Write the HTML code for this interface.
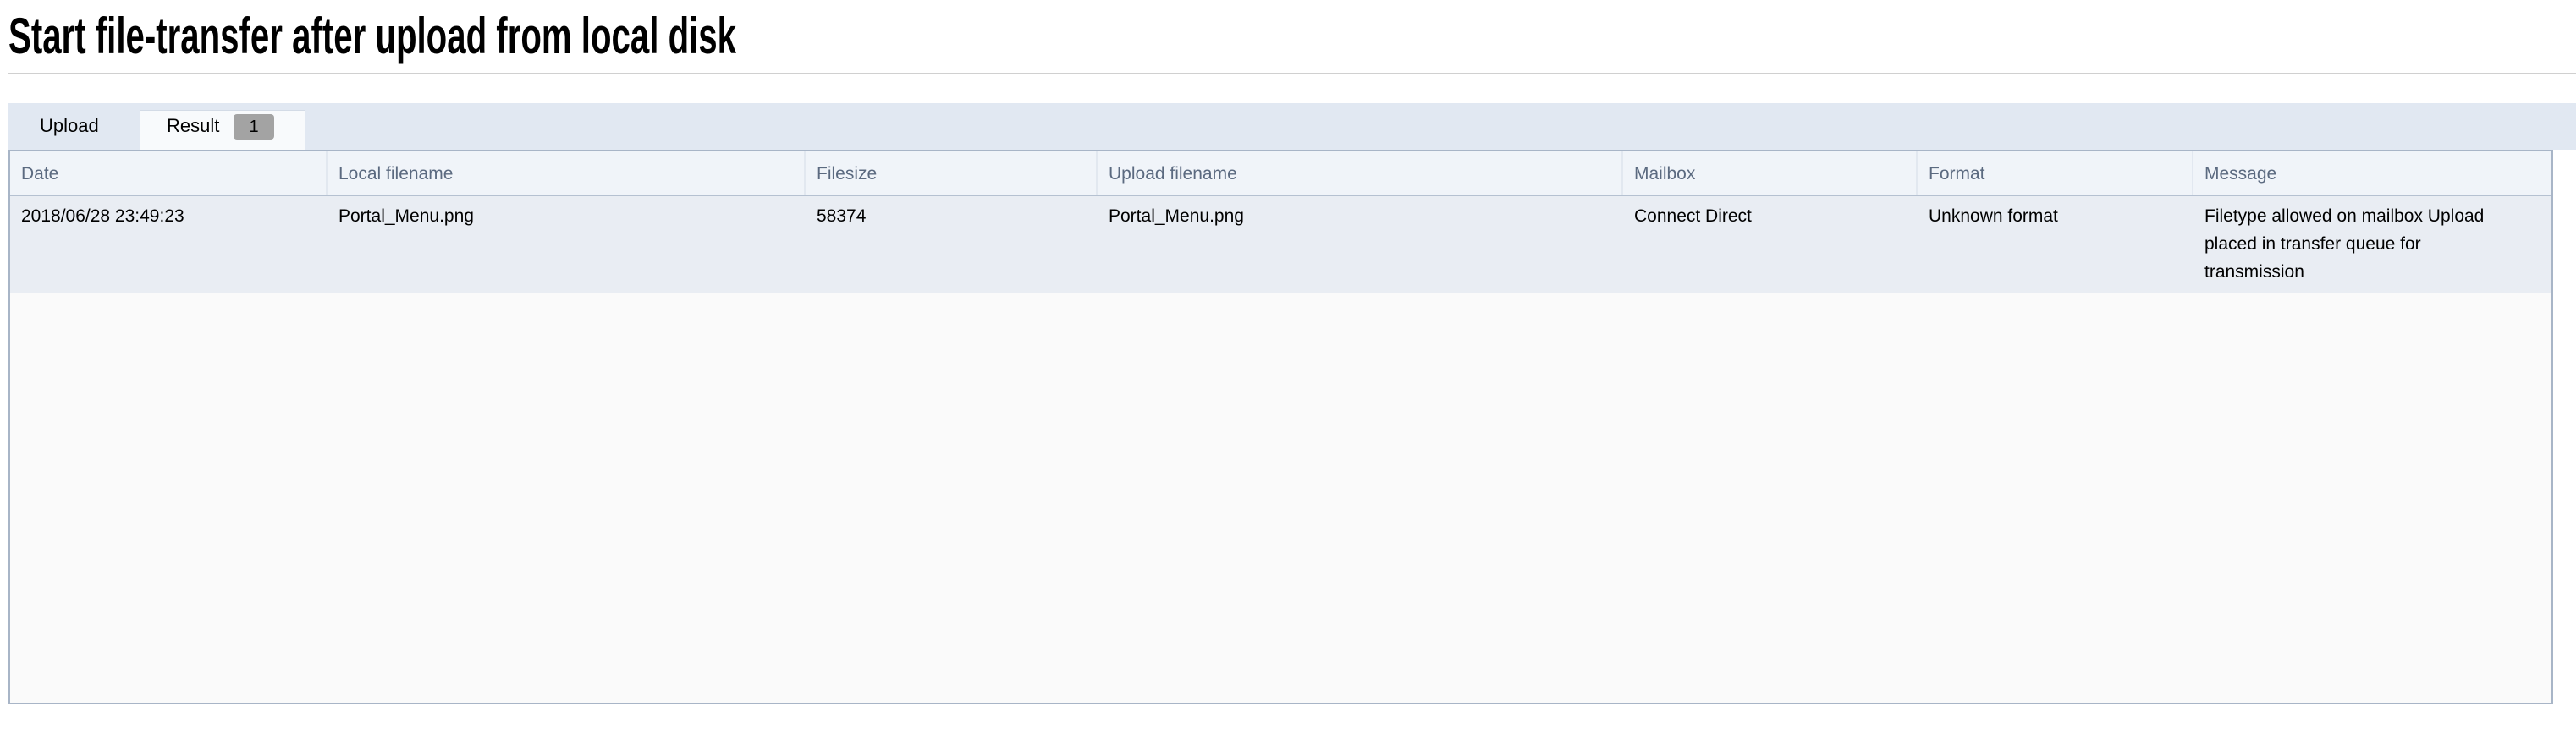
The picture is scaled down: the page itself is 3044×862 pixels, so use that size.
<!DOCTYPE html>
<html><head><style>
body{margin:0;width:3044px;height:862px;background:#fff;font-family:"Liberation Sans",Arial,sans-serif;position:relative;overflow:hidden}
.title{position:absolute;left:10px;top:8px;font-size:60px;font-weight:bold;white-space:nowrap;transform:scaleX(.67);transform-origin:0 0;color:#000;line-height:70px}
.hr{position:absolute;left:10px;right:0;top:86px;height:2px;background:#d0d0d0}
.tabbar{position:absolute;left:10px;right:0;top:122px;height:55px;background:#e1e8f2}
.tab{position:absolute;font-size:22px;color:#000}
.res{position:absolute;left:165px;top:130px;width:196px;height:47px;background:#f8fafc;border:1px solid #d3dbe6;border-bottom:none;box-sizing:border-box}
.badge{position:absolute;left:276px;top:135px;width:48px;height:30px;background:#a3a3a3;border-radius:4px;font-size:20px;text-align:center;line-height:30px}
.tbl{position:absolute;left:10px;top:177px;width:3007px;height:656px;border:2px solid #a8b5c7;box-sizing:border-box;background:#fafafa}
.hdr{position:absolute;left:0;right:0;top:0;height:51px;background:#f0f4f9;border-bottom:2px solid #b5c1d1}
.row{position:absolute;left:0;right:0;top:53px;height:114px;background:#e9edf3}
.c{position:absolute;font-size:21px;line-height:33px}
.h{color:#5b6a80;top:10px}
.d{color:#000;top:60px}
.div{position:absolute;top:0;width:2px;height:51px;background:#e2e8f0}
</style></head><body>
<div class="title">Start file-transfer after upload from local disk</div>
<div class="hr"></div>
<div class="tabbar"></div>
<div class="res"></div>
<div class="tab" style="left:47px;top:136px">Upload</div>
<div class="tab" style="left:197px;top:136px">Result</div>
<div class="badge">1</div>
<div class="tbl">
<div class="hdr"></div><div class="row"></div>
<div class="div" style="left:373px"></div><div class="div" style="left:938px"></div><div class="div" style="left:1283px"></div><div class="div" style="left:1904px"></div><div class="div" style="left:2252px"></div><div class="div" style="left:2578px"></div>
<div class="c h" style="left:13px">Date</div>
<div class="c h" style="left:388px">Local filename</div>
<div class="c h" style="left:953px">Filesize</div>
<div class="c h" style="left:1298px">Upload filename</div>
<div class="c h" style="left:1919px">Mailbox</div>
<div class="c h" style="left:2267px">Format</div>
<div class="c h" style="left:2593px">Message</div>
<div class="c d" style="left:13px">2018/06/28 23:49:23</div>
<div class="c d" style="left:388px">Portal_Menu.png</div>
<div class="c d" style="left:953px">58374</div>
<div class="c d" style="left:1298px">Portal_Menu.png</div>
<div class="c d" style="left:1919px">Connect Direct</div>
<div class="c d" style="left:2267px">Unknown format</div>
<div class="c d" style="left:2593px;width:360px">Filetype allowed on mailbox Upload placed in transfer queue for transmission</div>
</div>
</body></html>
